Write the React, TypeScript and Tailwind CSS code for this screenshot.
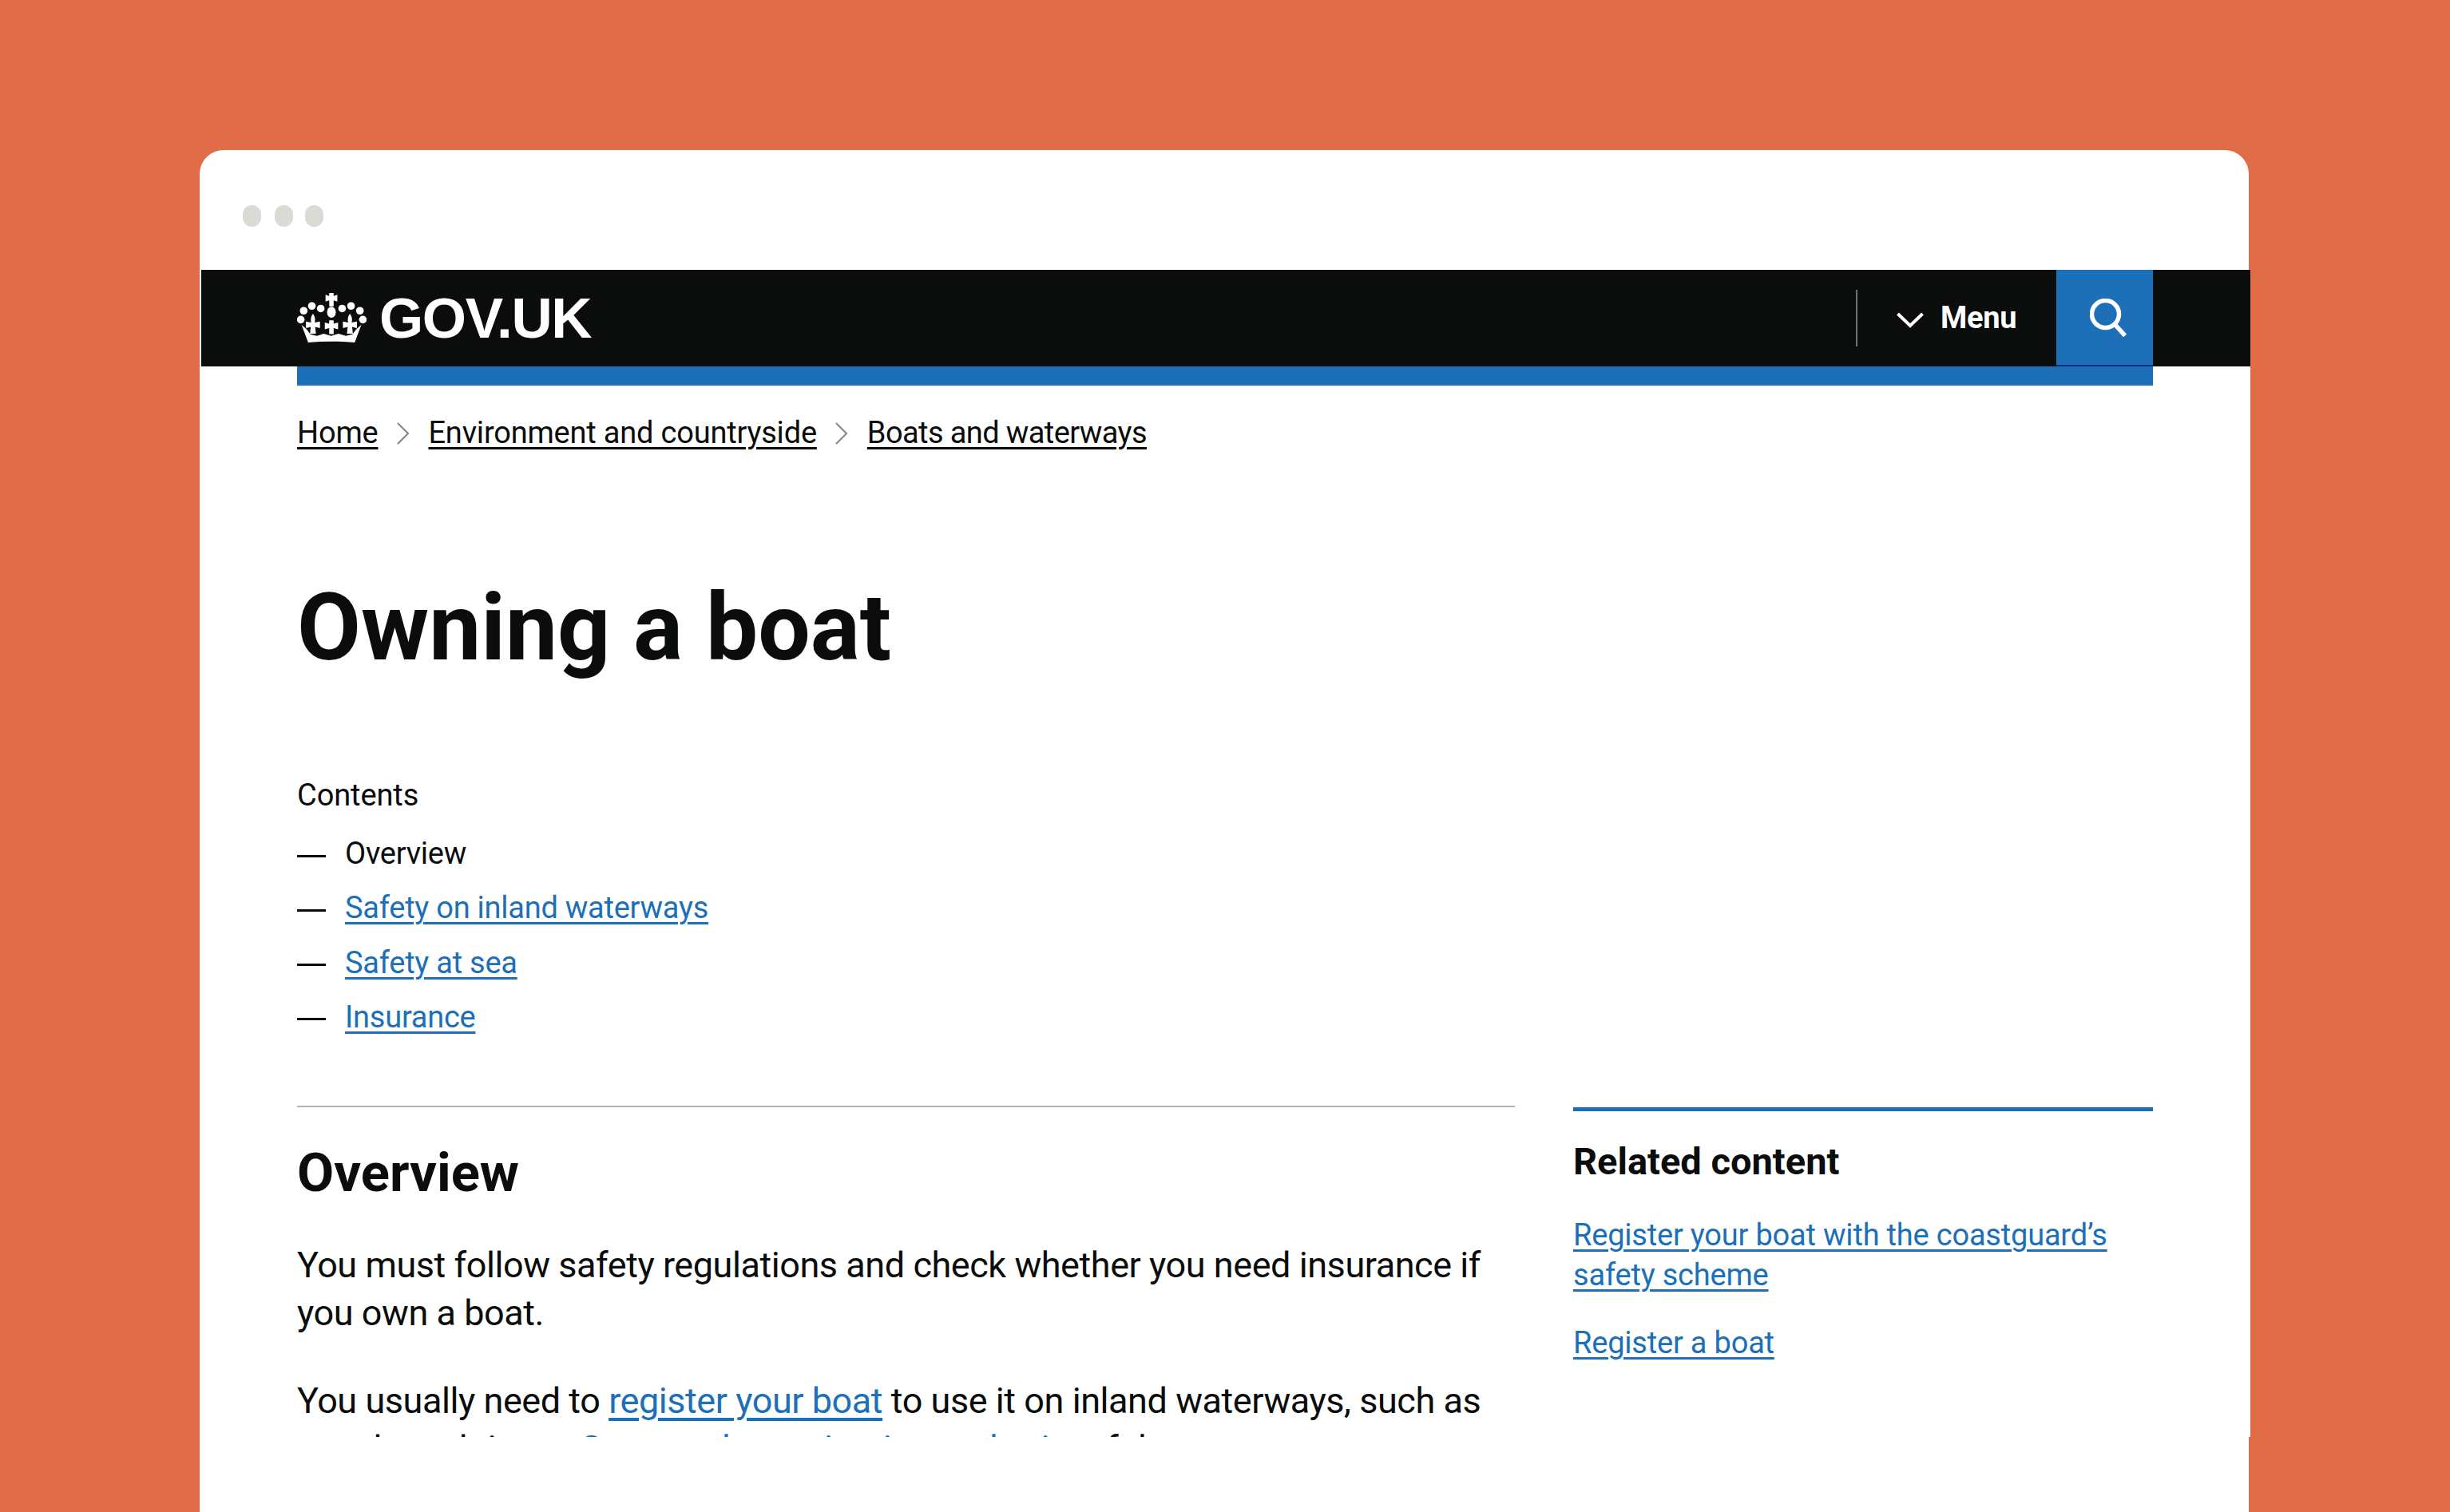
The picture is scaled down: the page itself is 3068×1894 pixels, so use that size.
const font = "font-['Roboto',sans-serif]";

function Crown() {
  return (
    <svg viewBox="2 0 94 68" className="h-[63px] w-[87px] shrink-0" fill="#fff">
      <circle cx="11" cy="24" r="5.200" />
      <circle cx="22" cy="17.500" r="5.200" />
      <circle cx="34" cy="21" r="5.200" />
      <circle cx="63" cy="21" r="5.200" />
      <circle cx="75" cy="17.500" r="5.200" />
      <circle cx="87" cy="24" r="5.200" />
      <circle cx="7" cy="36" r="5.200" />
      <circle cx="91" cy="36" r="5.200" />
      <ellipse cx="48.500" cy="26" rx="6" ry="7.500" />
      <path d="M45.500 0h6v4l5-1.500v9l-5-1.500v8h-6v-8l-5 1.500v-9l5 1.500z" />
      <path d="M45.500 37h6v4.500l6-1.500v9l-6-1.500v8h-6v-8l-6 1.500v-9l6 1.500z" />
      <path d="M23.500 28c2.500 3 3.500 7 2.500 12l7-1.500v9l-6.500-1.500 1 9h-8l1-9-6.500 1.500v-9l7 1.500c-1-5 0-9 2.500-12z" />
      <path d="M73.500 28c2.500 3 3.500 7 2.500 12l7-1.500v9l-6.500-1.500 1 9h-8l1-9-6.500 1.500v-9l7 1.500c-1-5 0-9 2.500-12z" />
      <path d="M8 43l7 6 5 7 9 2 9-3 10 3 10-3 10 3 9-2 5-7 7-6-9 24c-22-2-42-2-63 0z" />
    </svg>
  );
}

function Chevron() {
  return (
    <svg viewBox="0 0 16 28" className="mx-[23.500px] mt-[2px] h-[28px] w-[16px] shrink-0" fill="none" stroke="#7d868a" strokeWidth="2">
      <path d="M1 1l13 13L1 27" />
    </svg>
  );
}

function ContentsItem({ label, link }: { label: string; link?: boolean }) {
  return (
    <li className="flex items-center text-[38px] leading-[48px] tracking-[-0.25px]">
      <span className="mt-[6px] mr-[24px] h-[3px] w-[36px] bg-[#0b0c0c]" />
      {link ? <a className="text-[#1d70b8] underline decoration-[3px] underline-offset-[5px]">{label}</a> : <span>{label}</span>}
    </li>
  );
}

export default function App() {
  return (
    <div className={`h-[1894px] overflow-hidden bg-[#e16d48] pt-[188px] pl-[250px] text-[#0b0c0c] ${font}`}>
      <div className="h-[1706px] w-[2566px] rounded-t-[30px] bg-white">
        <div className="flex h-[150px] items-center pt-[14px] pl-[54px]">
          <span className="mr-[17px] h-[27px] w-[23px] rounded-full bg-[#dcdad4]" />
          <span className="mr-[15px] h-[27px] w-[23px] rounded-full bg-[#dcdad4]" />
          <span className="h-[27px] w-[23px] rounded-full bg-[#dcdad4]" />
        </div>

        <div className="ml-[2px] h-[1462px] w-[2566px] overflow-hidden bg-white">
          <header className="flex h-[121px] items-center bg-[#0b0c0c] pr-[122px] pl-[120px]">
            <div className="flex items-center">
              <Crown />
              <span className="ml-[16px] font-['Liberation_Sans',sans-serif] text-[71px] leading-none font-bold tracking-[-1.4px] text-white">GOV.UK</span>
            </div>
            <div className="ml-auto h-[71px] w-[2px] bg-[#6f7274]" />
            <div className="flex w-[249px] items-center pl-[49px] text-[38px] font-bold text-white">
              <svg viewBox="0 0 34 20" className="mt-1 h-[20px] w-[34px]" fill="none" stroke="#fff" strokeWidth="4">
                <path d="M1.500 2L17 17 32.500 2" />
              </svg>
              <span className="ml-[21px] tracking-[-0.3px]">Menu</span>
            </div>
            <div className="flex h-[121px] w-[121px] items-center justify-center border-b-2 border-[#003078] bg-[#1d70b8]">
              <svg viewBox="0 0 46 48" className="ml-2 h-[48px] w-[46px]" fill="none" stroke="#fff" strokeWidth="5.500">
                <circle cx="19.500" cy="19.500" r="17" />
                <path d="M31 32l13 14.500" />
              </svg>
            </div>
          </header>

          <div className="mr-[122px] ml-[120px]">
            <div className="h-[24px] bg-[#1d70b8]" />

            <nav className="mt-[35px] flex items-center text-[38px] leading-[48px] tracking-[-0.2px]">
              <a className="underline decoration-[3px] underline-offset-[5px]">Home</a>
              <Chevron />
              <a className="underline decoration-[3px] underline-offset-[5px]">Environment and countryside</a>
              <Chevron />
              <a className="tracking-[-0.6px] underline decoration-[3px] underline-offset-[5px]">Boats and waterways</a>
            </nav>

            <h1 className="mt-[155px] text-[116px] leading-[130px] font-bold">Owning a boat</h1>

            <div className="mt-[121px] text-[38px] leading-[48px] tracking-[-0.1px]">Contents</div>
            <ul className="mt-[25px] flex flex-col gap-[20.33px]">
              <ContentsItem label="Overview" />
              <ContentsItem label="Safety on inland waterways" link />
              <ContentsItem label="Safety at sea" link />
              <ContentsItem label="Insurance" link />
            </ul>

            <div className="mt-[87px] grid grid-cols-[1525px_726px] gap-x-[73px]">
              <div className="border-t-2 border-[#b1b4b6]">
                <h2 className="mt-[37px] text-[67px] leading-[90px] font-bold">Overview</h2>
                <p className="mt-[41px] text-[45px] leading-[60.5px] tracking-[-0.45px]">
                  You must follow safety regulations and check whether you need insurance if you own a boat.
                </p>
                <p className="mt-[49px] text-[45px] leading-[60.5px] tracking-[-0.45px]">
                  You usually need to <a className="text-[#1d70b8] underline decoration-[4px] underline-offset-[6px]">register your boat</a> to use it on inland waterways, such as canals and rivers. <a className="text-[#1d70b8] underline decoration-[4px] underline-offset-[6px]">Contact the navigation authority</a> of the waters you want to use.
                </p>
              </div>
              <aside className="mt-[2px] border-t-[5px] border-[#1d70b8]">
                <h2 className="mt-[33px] text-[47px] leading-[60px] font-bold">Related content</h2>
                <div className="mt-[37px] text-[38px] leading-[50px] tracking-[-0.2px] text-[#1d70b8]">
                  <a className="underline decoration-[3px] underline-offset-[5px]">Register your boat with the coastguard’s safety scheme</a>
                </div>
                <div className="mt-[35px] text-[38px] leading-[50px] tracking-[-0.2px] text-[#1d70b8]">
                  <a className="underline decoration-[3px] underline-offset-[5px]">Register a boat</a>
                </div>
              </aside>
            </div>
          </div>
        </div>
      </div>
    </div>
  );
}
